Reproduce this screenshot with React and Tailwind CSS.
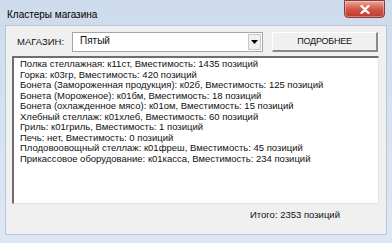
import React from 'react';

const items = [
  'Полка стеллажная: к11ст, Вместимость: 1435 позиций',
  'Горка: к03гр, Вместимость: 420 позиций',
  'Бонета (Замороженная продукция): к02б, Вместимость: 125 позиций',
  'Бонета (Мороженое): к01бм, Вместимость: 18 позиций',
  'Бонета (охлажденное мясо): к01ом, Вместимость: 15 позиций',
  'Хлебный стеллаж: к01хлеб, Вместимость: 60 позиций',
  'Гриль: к01гриль, Вместимость: 1 позиций',
  'Печь: нет, Вместимость: 0 позиций',
  'Плодовоовощный стеллаж: к01фреш, Вместимость: 45 позиций',
  'Прикассовое оборудование: к01касса, Вместимость: 234 позиций',
];

export default function App() {
  return (
    <div
      className="w-[392px] h-[243px] flex flex-col bg-gradient-to-b from-[#cddbec] to-[#dde8f4] text-[#111] overflow-hidden"
      style={{ fontFamily: '"Liberation Sans", Arial, sans-serif' }}
    >
      {/* title bar */}
      <div className="h-[25px] flex items-start justify-between pl-[7px] pr-[7px]">
        <span className="text-[10px] mt-[7px] text-black">Кластеры магазина</span>
        <div className="w-[41px] h-[18px] rounded-b-[4px] border border-[#8a3a3a] bg-gradient-to-b from-[#e9a99c] via-[#d0574a] to-[#c0392b] flex items-center justify-center shadow-[inset_0_0_0_1px_rgba(255,255,255,0.35)]">
          <svg width="10" height="9" viewBox="0 0 10 9">
            <path d="M1.5 1 L8.5 8 M8.5 1 L1.5 8" stroke="#fff" strokeWidth="2.2" strokeLinecap="round" />
          </svg>
        </div>
      </div>

      {/* client area */}
      <div className="flex-1 mx-[5px] mb-[8px] bg-[#f0f0f0] border border-[#b9c6d6] flex flex-col pl-[6px] pr-[7px]">
        <div className="flex items-center mt-[6px] h-[20px]">
          <span className="w-[60px] pl-[5px] text-[9.5px]">МАГАЗИН:</span>
          <div className="w-[191px] h-[20px] bg-white border border-[#a5a5a5] flex items-center justify-between">
            <span className="text-[10px] pl-[7px] -mt-[3px]">Пятый</span>
            <div className="w-[13px] h-[16px] mr-[1px] bg-[#f0f0f0] border border-[#c9c9c9] flex items-center justify-center">
              <svg width="7" height="4" viewBox="0 0 7 4">
                <path d="M0 0 H7 L3.5 4 Z" fill="#000" />
              </svg>
            </div>
          </div>
          <div className="ml-[9px] w-[106px] h-[20px] bg-[#f0f0f0] border-t border-l border-[#fff] border-r-2 border-b-2 border-r-[#8a8a8a] border-b-[#8a8a8a] flex items-center justify-center text-[9px] tracking-tight">
            ПОДРОБНЕЕ
          </div>
        </div>

        <div className="mt-[4px] h-[148px] bg-white border-t-2 border-l-2 border-[#6e6e6e] border-r border-b border-r-[#e3e3e3] border-b-[#e3e3e3] pl-[6px] pt-[1px]">
          {items.map((t, i) => (
            <div key={i} className="text-[9.5px] leading-[10.5px] whitespace-nowrap">
              {t}
            </div>
          ))}
        </div>

        <div className="flex justify-end pr-[39px] mt-[4px]">
          <span className="text-[9.5px]">Итого: 2353 позиций</span>
        </div>
      </div>
    </div>
  );
}
